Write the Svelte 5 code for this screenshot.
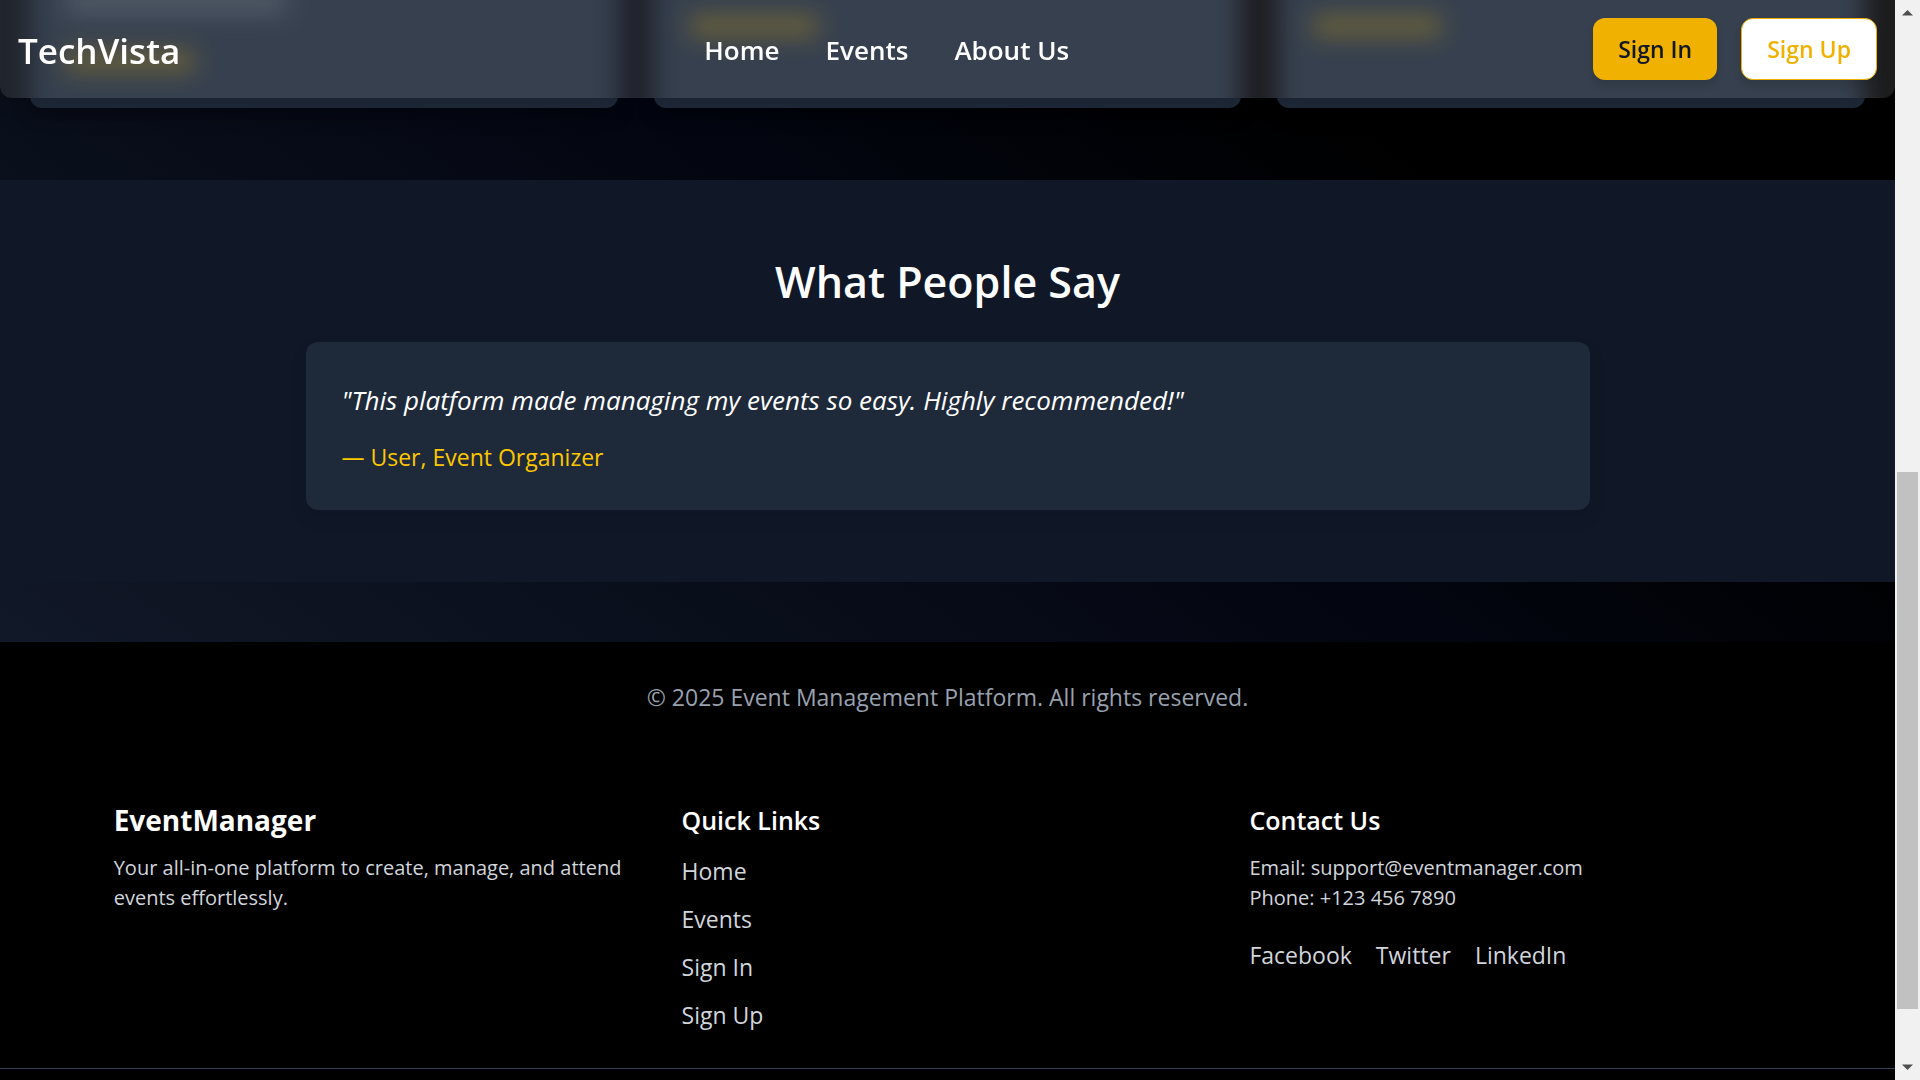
<script>
  const navLinks = ['Home', 'Events', 'About Us'];
  const quickLinks = ['Home', 'Events', 'Sign In', 'Sign Up'];
  const socialLinks = ['Facebook', 'Twitter', 'LinkedIn'];
</script>

<div class="shell">
  <div class="page">
    <header class="navbar">
      <!-- Frosted copy of the card row that lies behind the bar -->
      <div class="frost" aria-hidden="true">
        <div class="frost-cards">
          <div class="frost-card tall">
            <span class="line"></span>
            <span class="more"></span>
          </div>
          <div class="frost-card"><span class="more"></span></div>
          <div class="frost-card"><span class="more"></span></div>
        </div>
      </div>
      <a class="brand" href="#top">TechVista</a>
      <nav class="nav-links" aria-label="Main">
        {#each navLinks as label}
          <a href="#{label}">{label}</a>
        {/each}
      </nav>
      <div class="actions">
        <button class="btn primary" type="button">Sign In</button>
        <button class="btn outline" type="button">Sign Up</button>
      </div>
    </header>

    <main>
      <section class="events" aria-label="Events">
        <div class="event-card"></div>
        <div class="event-card"></div>
        <div class="event-card"></div>
      </section>

      <section class="testimonials">
        <h2>What People Say</h2>
        <figure>
          <blockquote>"This platform made managing my events so easy. Highly recommended!"</blockquote>
          <figcaption>— User, Event Organizer</figcaption>
        </figure>
      </section>
    </main>

    <footer>
      <p class="copyright">© 2025 Event Management Platform. All rights reserved.</p>
      <div class="columns">
        <section>
          <h3 class="name">EventManager</h3>
          <p class="small">Your all-in-one platform to create, manage, and attend events effortlessly.</p>
        </section>
        <section>
          <h3>Quick Links</h3>
          <ul>
            {#each quickLinks as label}
              <li><a href="#{label}">{label}</a></li>
            {/each}
          </ul>
        </section>
        <section>
          <h3>Contact Us</h3>
          <p class="small">Email: support@eventmanager.com<br />Phone: +123 456 7890</p>
          <div class="social">
            {#each socialLinks as label}
              <a href="#{label}">{label}</a>
            {/each}
          </div>
        </section>
      </div>
      <div class="bottom"></div>
    </footer>
  </div>

  <div class="scrollbar" aria-hidden="true">
    <svg viewBox="0 0 25 25"><path d="M7 15.500h11L12.500 10z" /></svg>
    <div class="track"><div class="thumb"></div></div>
    <svg viewBox="0 0 25 25"><path d="M7 9.500h11L12.500 15z" /></svg>
  </div>
</div>

<style>
  :global(body) {
    margin: 0;
    background: #000;
  }
  .shell {
    display: flex;
    height: 100vh;
    overflow: hidden;
    font-family: 'Open Sans', 'Noto Sans', sans-serif;
    font-size: 23px;
    line-height: 36px;
    color: #fff;
  }
  .page {
    flex: 1;
    min-width: 0;
    overflow: hidden;
    background: #000;
  }
  a {
    color: inherit;
    text-decoration: none;
  }
  h2, h3, p, ul, figure, blockquote {
    margin: 0;
    padding: 0;
  }

  .navbar {
    position: sticky;
    top: 0;
    z-index: 2;
    box-sizing: border-box;
    height: 98px;
    margin-bottom: -98px;
    padding: 0 18px;
    display: grid;
    grid-template-columns: auto 1fr auto;
    align-items: center;
    border-radius: 0 0 12px 12px;
    box-shadow: 0 8px 16px rgba(0, 0, 0, 0.12);
  }
  .frost {
    position: absolute;
    inset: 0;
    z-index: -1;
    overflow: hidden;
    border-radius: 0 0 12px 12px;
    background: linear-gradient(90deg, #060b14, #030611 50%, #000 75%);
  }
  .frost::after {
    content: '';
    position: absolute;
    inset: 0;
    background: rgba(255, 255, 255, 0.11);
  }
  .frost-cards {
    position: absolute;
    inset: -60px 0;
    display: grid;
    grid-template-columns: repeat(3, 1fr);
    gap: 36px;
    padding: 0 30px;
    filter: blur(12px);
  }
  .frost-card {
    padding: 76px 36px 0;
    background: #1e2939;
  }
  .frost-card.tall {
    padding-top: 48px;
  }
  .line,
  .more {
    display: block;
  }
  .line {
    width: 220px;
    height: 26px;
    margin-bottom: 37px;
    background: #3c4655;
  }
  .more {
    width: 128px;
    height: 20px;
    background: #5d5222;
  }
  .brand {
    padding-top: 3px;
    font-size: 35px;
    line-height: 48px;
    font-weight: 600;
  }
  .nav-links {
    display: flex;
    justify-content: center;
    gap: 46px;
    padding-top: 2px;
    font-size: 26px;
    font-weight: 600;
  }
  .actions {
    display: flex;
    gap: 24px;
  }
  .btn {
    box-sizing: border-box;
    height: 62px;
    padding: 0 25px;
    border: 0;
    border-radius: 12px;
    font: inherit;
    font-weight: 600;
    box-shadow: 0 6px 9px rgba(0, 0, 0, 0.12);
  }
  .primary {
    background: #f0b100;
    color: #101828;
  }
  .outline {
    border: 1px solid #f0b100;
    background: #fff;
    color: #f0b100;
  }

  main {
    padding-bottom: 60px;
    background: linear-gradient(35deg, #111827 0%, #030611 50%, #000 75%);
  }
  .events {
    display: grid;
    grid-template-columns: repeat(3, 1fr);
    gap: 36px;
    padding: 0 30px 72px;
  }
  .event-card {
    height: 108px;
    border-radius: 0 0 12px 12px;
    background: #1e2939;
    box-shadow: 0 8px 18px rgba(0, 0, 0, 0.3);
  }

  .testimonials {
    padding: 75px 30px 72px;
    background: #101828;
  }
  h2 {
    margin-bottom: 33px;
    font-size: 43px;
    line-height: 54px;
    font-weight: 600;
    text-align: center;
  }
  figure {
    box-sizing: border-box;
    max-width: 1284px;
    margin: 0 auto;
    padding: 37px 36px 35px;
    border-radius: 12px;
    background: #1e2939;
    box-shadow: 0 8px 16px rgba(0, 0, 0, 0.12);
  }
  blockquote {
    margin-bottom: 18px;
    font-size: 26px;
    line-height: 42px;
    font-style: italic;
  }
  figcaption {
    color: #fdc700;
  }

  footer {
    background: #000;
    color: #d1d5dc;
  }
  .copyright {
    padding: 37px 0 36px;
    text-align: center;
    color: #99a1af;
  }
  .columns {
    display: grid;
    grid-template-columns: repeat(3, 1fr);
    gap: 36px;
    padding: 48px 6% 35px;
  }
  h3 {
    margin-bottom: 12px;
    font-size: 25px;
    line-height: 42px;
    font-weight: 600;
    color: #fff;
  }
  .name {
    font-size: 28px;
    font-weight: 700;
  }
  .small {
    font-size: 20px;
    line-height: 30px;
  }
  ul {
    display: grid;
    gap: 12px;
    list-style: none;
  }
  .social {
    display: flex;
    gap: 24px;
    margin-top: 24px;
  }
  .bottom {
    height: 36px;
    border-top: 1px solid #364153;
  }

  .scrollbar {
    display: flex;
    flex-direction: column;
    width: 25px;
    background: #f1f1f1;
  }
  .scrollbar svg {
    width: 25px;
    height: 25px;
    fill: #505050;
  }
  .track {
    flex: 1;
    display: grid;
    grid-template-rows: 447fr 537fr 46fr;
    padding: 0 2px;
  }
  .thumb {
    grid-row: 2;
    background: #c1c1c1;
  }
</style>
